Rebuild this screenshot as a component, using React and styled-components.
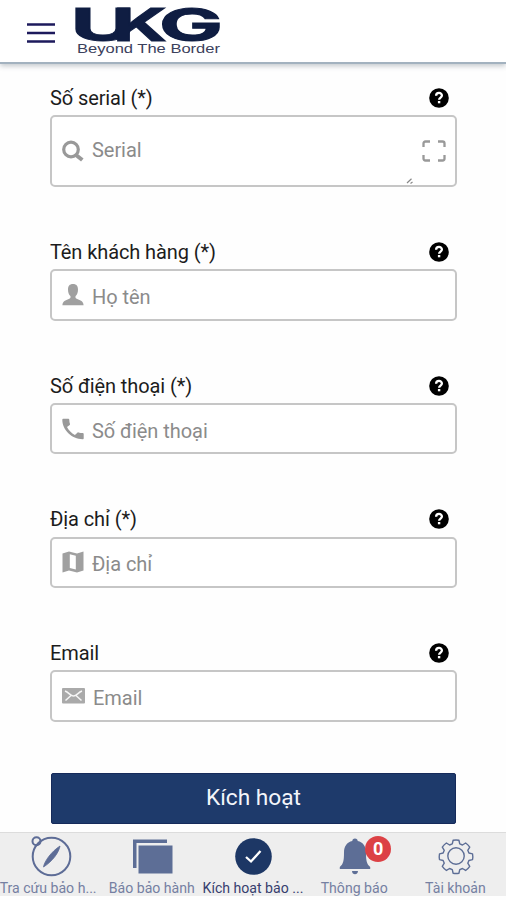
import React, { useState } from 'react';
import styled, { createGlobalStyle } from 'styled-components';

const GlobalStyle = createGlobalStyle`
    * {
        box-sizing: border-box;
    }
    body {
        margin: 0;
        background: #fefefe;
        font-family: Roboto, "Liberation Sans", sans-serif;
        overflow: hidden;
    }
`;

const Logo = () => (
    <svg width="150" height="58" viewBox="0 0 150 58" overflow="visible">
        <g fill="#0f1d42" stroke="#0f1d42" strokeWidth="1" fontFamily="Inter" fontWeight="700" fontSize="45.5">
            <text x="-2.5" y="41" textLength="65" lengthAdjust="spacingAndGlyphs">U</text>
            <text x="40" y="41" textLength="54" lengthAdjust="spacingAndGlyphs">K</text>
            <text x="86" y="41" textLength="64" lengthAdjust="spacingAndGlyphs">G</text>
        </g>
        <text x="4" y="52.5" fill="#3b415c" fontFamily="Liberation Sans" fontSize="12" textLength="143" lengthAdjust="spacingAndGlyphs">
            Beyond The Border
        </text>
    </svg>
);

const MenuIcon = () => (
    <svg width="28" height="22" viewBox="0 0 28 22" stroke="#1d1a5c" strokeWidth="2.4">
        <path d="M0 2.5h28M0 11h28M0 19.5h28" />
    </svg>
);

const HelpIcon = () => (
    <svg width="20" height="20" viewBox="0 0 20 20">
        <circle cx="10" cy="10" r="9.8" fill="#000" />
        <path d="M7.1 7.8c0-3.8 5.8-3.7 5.8-.3 0 2-2.8 2.1-2.8 4.3" fill="none" stroke="#fff" strokeWidth="2.3" />
        <rect x="8.9" y="13" width="2.4" height="2.3" fill="#fff" />
    </svg>
);

const SearchIcon = () => (
    <svg width="22" height="22" viewBox="0 0 22 22" fill="none" stroke="#999">
        <circle cx="9" cy="9.5" r="7.3" strokeWidth="3.2" />
        <path d="M14 15l6.3 5" strokeWidth="4" />
    </svg>
);

const UserIcon = () => (
    <svg width="22" height="22" viewBox="0 0 22 22" fill="#a0a0a0">
        <path d="M11 0c3.5 0 5 2.2 5 5.4 0 3-1 5.4-2.4 6.7-.5 1.7.1 2.4 1.6 3 3.2 1.2 6.2 2.2 6.4 6.1H.4c.2-3.9 3.2-4.9 6.4-6.1 1.5-.6 2.1-1.3 1.6-3C7 10.8 6 8.4 6 5.4 6 2.2 7.5 0 11 0z" />
    </svg>
);

const PhoneIcon = () => (
    <svg width="22" height="22" viewBox="0 0 22 22" fill="#999">
        <path d="M1.2.8h5.2c.5 0 .9.4.9.9 0 1.5.2 2.9.7 4.3.1.4 0 .8-.3 1.1L5 9.1c1.8 3.5 4.4 6.1 7.9 7.9l2.5-2.3c.3-.3.7-.4 1.1-.3 1.4.5 2.8.7 4.3.7.5 0 .9.4.9.9v4.2c0 .6-.4 1-1 1C9.7 21.2.3 11.8.3 1.8c0-.6.4-1 .9-1z" />
    </svg>
);

const MapIcon = () => (
    <svg width="22" height="22" viewBox="0 0 22 22">
        <path d="M.5 2.5 7 .6l8 2L21.5.6v18.9L15 21.5l-8-2-6.5 2z" fill="#a0a0a0" />
        <path d="M7.8 3.2l6 1.6v13.8l-6-1.7z" fill="#fff" />
    </svg>
);

const MailIcon = () => (
    <svg width="23" height="16" viewBox="0 0 23 16">
        <rect width="23" height="15.5" rx="1" fill="#aaa" />
        <path d="M3 3c4 1.5 5.5 5 8.5 5S16 4.5 20 3M3.5 12.5 9 7.5M19.5 12.5 14 7.5" fill="none" stroke="#f6f6f6" strokeWidth="1.5" />
    </svg>
);

const ScanIcon = () => (
    <svg width="24" height="22" viewBox="0 0 24 22" fill="none" stroke="#999" strokeWidth="2.3">
        <path d="M1.5 7V3.5q0-2 2-2H8M16 1.5h4.5q2 0 2 2V7M22.5 15v3.5q0 2-2 2H16M8 20.5H3.5q-2 0-2-2V15" />
    </svg>
);

const ResizeMark = () => (
    <svg width="8" height="7" viewBox="0 0 8 7" fill="none" stroke="#888" strokeWidth="1.2">
        <path d="M1 5 5.5.8M4.5 5.5 6.5 4" />
    </svg>
);

const CompassIcon = () => (
    <svg width="42" height="42" viewBox="0 0 42 42" fill="none" stroke="#5d6c96" strokeWidth="2">
        <circle cx="21.5" cy="21.5" r="18.8" />
        <circle cx="6.5" cy="6.3" r="4" />
        <path d="M30 11c-1 6-7 15-16.5 21 1-6 8-15.5 16.5-21z" fill="#5d6c96" stroke="#5d6c96" strokeWidth="0.8" />
    </svg>
);

const CardsIcon = () => (
    <svg width="42" height="42" viewBox="0 0 42 42" fill="#5d6e96">
        <path d="M2 4.5h34v3.5H5.5V33H2z" />
        <rect x="7.5" y="10.5" width="34" height="28" />
    </svg>
);

const CheckIcon = () => (
    <svg width="42" height="42" viewBox="0 0 42 42" fill="none">
        <circle cx="21.5" cy="21.5" r="18.3" fill="#1d3765" />
        <path d="M14 22l5 4.5 9.5-10.5" stroke="#fff" strokeWidth="2.3" />
    </svg>
);

const BellIcon = () => (
    <svg width="42" height="42" viewBox="0 0 42 42" fill="#5d6e96">
        <path d="M22 3.5c1.7 0 2.7 1.1 2.7 2.6 5.5 1.3 8.3 5.4 8.3 11.4 0 8.5.7 11.5 4.2 14.5v2h-30.4v-2c3.5-3 4.2-6 4.2-14.5 0-6 2.8-10.1 8.3-11.4 0-1.5 1-2.6 2.7-2.6z" />
        <path d="M19 36h6c-.2 2.3-1.4 3.3-3 3.3S19.2 38.3 19 36z" />
    </svg>
);

const GearIcon = () => (
    <svg width="42" height="42" viewBox="-2.6 -0.5 45 45" fill="none" stroke="#5d6e96" strokeWidth="1.5" strokeLinejoin="round">
        <path d="M17.9 5.1q3.1-.6 6.2 0l.9 3.9 2.9 1.2 3.4-2.1q2.6 1.8 4.4 4.4l-2.1 3.4 1.2 2.9 3.9.9q.6 3.1 0 6.2l-3.9.9-1.2 2.9 2.1 3.4q-1.8 2.6-4.4 4.4l-3.4-2.1-2.9 1.2-.9 3.9q-3.1.6-6.2 0l-.9-3.9-2.9-1.2-3.4 2.1q-2.6-1.8-4.4-4.4l2.1-3.4-1.2-2.9-3.9-.9q-.6-3.1 0-6.2l3.9-.9 1.2-2.9-2.1-3.4q1.8-2.6 4.4-4.4l3.4 2.1L17 9z" />
        <circle cx="21" cy="22" r="8.8" />
    </svg>
);

const campos = [
    { id: 'serial', label: 'Số serial (*)', placeholder: 'Serial', icon: <SearchIcon />, scan: true },
    { id: 'name', label: 'Tên khách hàng (*)', placeholder: 'Họ tên', icon: <UserIcon /> },
    { id: 'phone', label: 'Số điện thoại (*)', placeholder: 'Số điện thoại', icon: <PhoneIcon /> },
    { id: 'address', label: 'Địa chỉ (*)', placeholder: 'Địa chỉ', icon: <MapIcon /> },
    { id: 'email', label: 'Email', placeholder: 'Email', icon: <MailIcon /> },
];

const tabs = [
    { label: 'Tra cứu bảo h...', icon: <CompassIcon />, pull: true },
    { label: 'Báo bảo hành', icon: <CardsIcon /> },
    { label: 'Kích hoạt bảo ...', icon: <CheckIcon /> },
    { label: 'Thông báo', icon: <BellIcon />, badge: 0 },
    { label: 'Tài khoản', icon: <GearIcon /> },
];

const App = () => {
    const [valores, setValores] = useState({});
    const [activo, setActivo] = useState(2);

    return (
        <>
        <GlobalStyle />
        <Screen>
            {/* Header */}
            <Header>
                <MenuButton aria-label="Menu"><MenuIcon /></MenuButton>
                <Logo />
            </Header>

            {/* Form */}
            <Form onSubmit={(e) => e.preventDefault()}>
                {campos.map((c) => (
                    <Field key={c.id}>
                        <LabelRow>
                            <Label htmlFor={c.id}>{c.label}</Label>
                            <HelpIcon />
                        </LabelRow>
                        <InputBox $tall={c.scan}>
                            {c.icon}
                            <Input
                                id={c.id}
                                $tall={c.scan}
                                placeholder={c.placeholder}
                                value={valores[c.id] || ''}
                                onChange={(e) => setValores({ ...valores, [c.id]: e.target.value })}
                            />
                            {c.scan && <Grip><ResizeMark /></Grip>}
                            {c.scan && <ScanIcon />}
                        </InputBox>
                    </Field>
                ))}
                <Submit>Kích hoạt</Submit>
            </Form>

            {/* Bottom tabs */}
            <TabBar>
                {tabs.map((t, i) => (
                    <Tab key={t.label} $active={i === activo} onClick={() => setActivo(i)}>
                        <TabIcon>
                            {t.icon}
                            {t.badge !== undefined && <Badge>{t.badge}</Badge>}
                        </TabIcon>
                        <TabLabel $pull={t.pull}>{t.label}</TabLabel>
                    </Tab>
                ))}
            </TabBar>
        </Screen>
        </>
    );
};

export default App;

const Screen = styled.div`
    width: 506px;
    height: 900px;
    display: flex;
    flex-direction: column;
    padding-bottom: 4px;
    background: #fefefe;
`;

const Header = styled.header`
    height: 64px;
    flex: none;
    display: flex;
    align-items: flex-start;
    padding-left: 27px;
    gap: 18px;
    background: #fff;
    border-bottom: 2px solid #a3b2bf;
    box-shadow: 0 2px 5px rgba(60, 75, 90, 0.3);
`;

const MenuButton = styled.button`
    display: flex;
    margin-top: 22px;
    padding: 0;
    border: 0;
    background: none;
`;

const Form = styled.form`
    flex: 1;
    display: flex;
    flex-direction: column;
    gap: 46.2px;
    padding: 15px 49px 0 50px;
`;

const Field = styled.div`
    display: flex;
    flex-direction: column;
`;

const LabelRow = styled.div`
    height: 36px;
    display: flex;
    align-items: center;
    justify-content: space-between;
    padding: 1.4px 8px 0 0;
`;

const Label = styled.label`
    font-size: 20px;
    letter-spacing: -0.1px;
    color: #1c1c1c;
`;

const InputBox = styled.div`
    height: ${({ $tall }) => ($tall ? '72px' : '51.5px')};
    display: flex;
    align-items: center;
    gap: 8px;
    padding: 0 9px 0 10px;
    border: 2px solid #c6c6c6;
    border-radius: 5px;
    background: #fff;
`;

const Input = styled.input`
    flex: 1;
    min-width: 0;
    padding: ${({ $tall }) => ($tall ? '0 0 3px' : '4px 0 0')};
    border: 0;
    outline: 0;
    background: none;
    font: 20px Roboto, "Liberation Sans", sans-serif;
    letter-spacing: -0.05px;
    color: #333;
    &::placeholder {
        color: #8b8b8b;
        opacity: 1;
    }
`;

const Grip = styled.span`
    display: flex;
    align-self: flex-end;
`;

const Submit = styled.button`
    height: 51.5px;
    margin: 5px 1px 0;
    padding: 0 0 2px;
    border: 1px solid #162a5a;
    border-radius: 2px;
    background: #1e3a6b;
    color: #f3f5fa;
    font: 22.7px Roboto, "Liberation Sans", sans-serif;
`;

const TabBar = styled.nav`
    height: 64px;
    flex: none;
    display: grid;
    grid-template-columns: repeat(5, 1fr);
    border-top: 1px solid #dcdcdc;
    background: #eee;
`;

const Tab = styled.button`
    display: flex;
    flex-direction: column;
    align-items: center;
    min-width: 0;
    padding: 2px 0 0;
    border: 0;
    background: none;
    color: ${({ $active }) => ($active ? '#37406f' : '#7580a2')};
`;

const TabIcon = styled.span`
    position: relative;
    display: flex;
`;

const Badge = styled.span`
    position: absolute;
    top: 1px;
    left: 32px;
    width: 26px;
    height: 26px;
    border-radius: 50%;
    background: #dc4145;
    color: #fff;
    font: bold 18px/26px Roboto, "Liberation Sans", sans-serif;
    text-align: center;
`;

const TabLabel = styled.span`
    margin-top: 2px;
    margin-right: ${({ $pull }) => ($pull ? '5px' : '0')};
    font: 14.1px/18px Roboto, "Liberation Sans", sans-serif;
    white-space: nowrap;
`;
